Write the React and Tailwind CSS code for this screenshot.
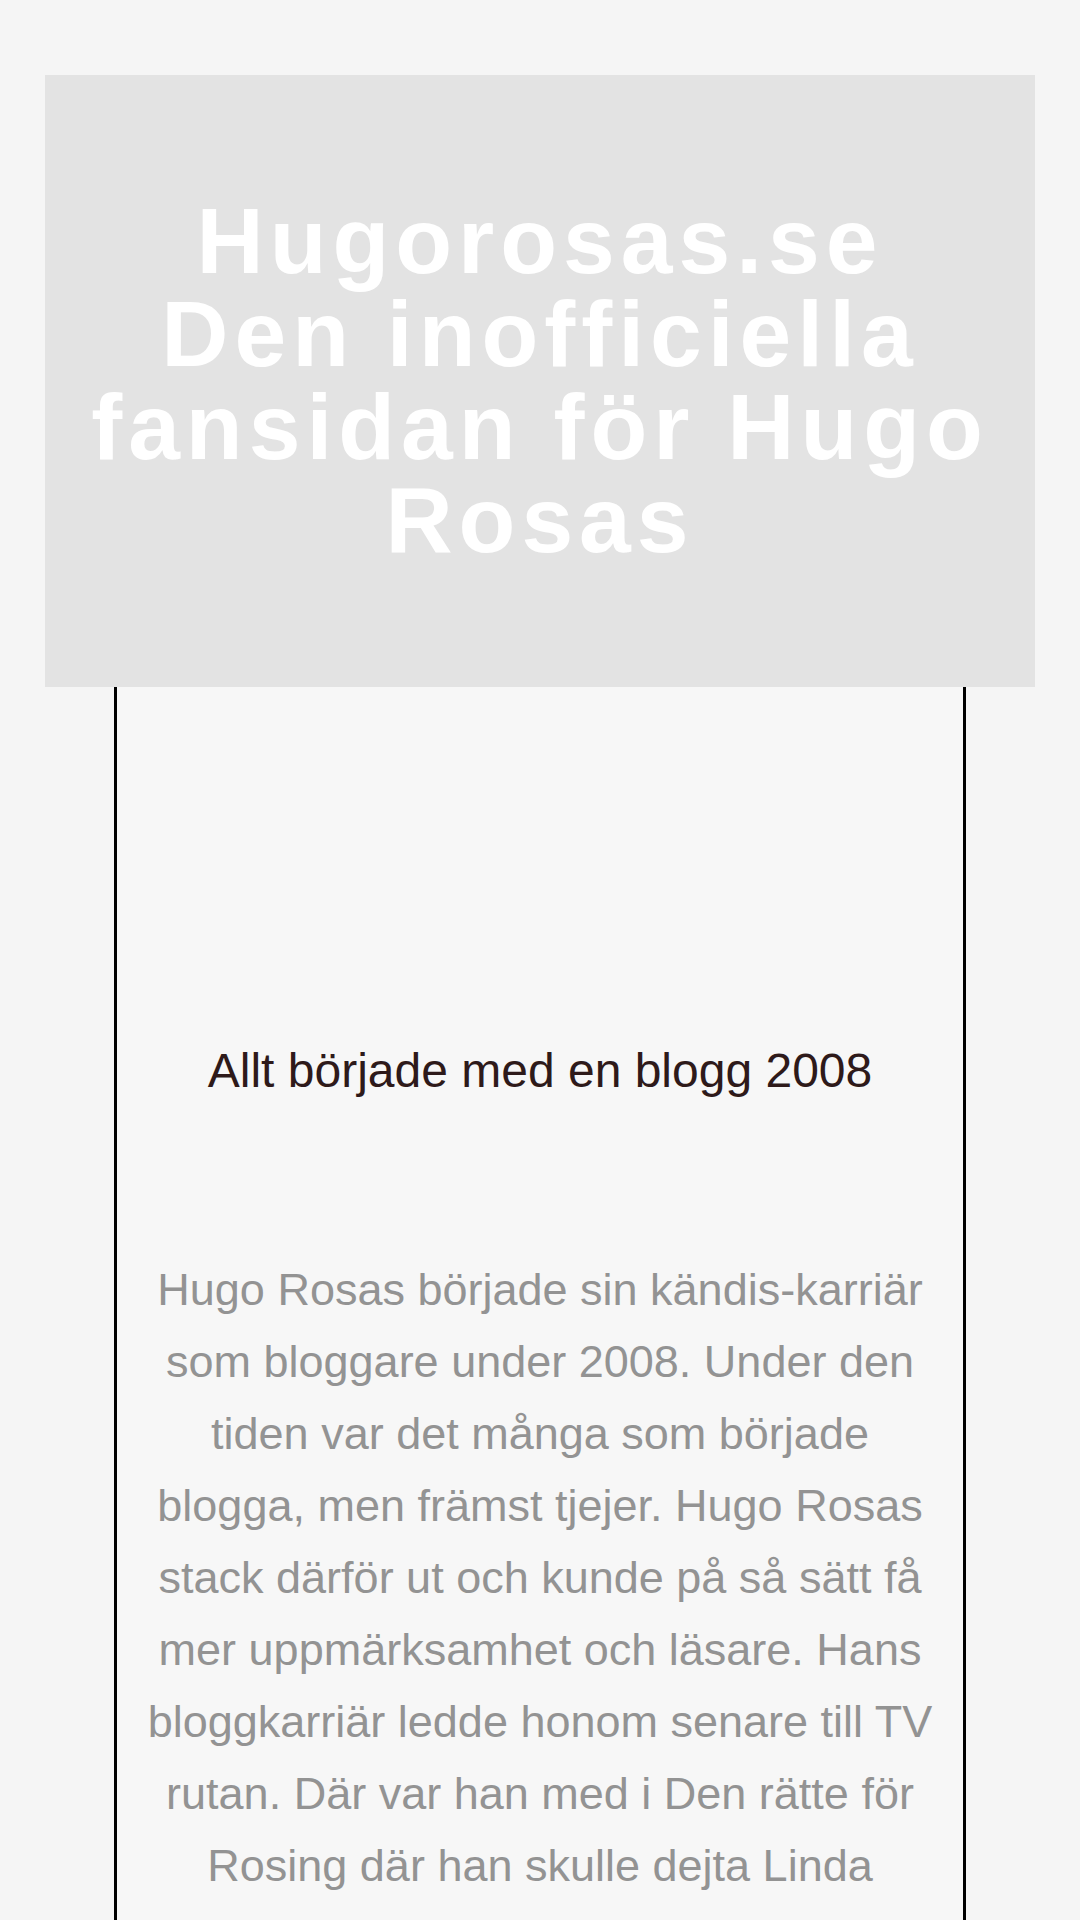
export default function App() {
  const font = { fontFamily: '"Liberation Sans", Arial, sans-serif' };
  return (
    <div className="min-h-[1920px] bg-[#f5f5f5] overflow-hidden" style={font}>
      <div className="pt-[75px] px-[45px]">
        <header className="bg-[#e3e3e3] py-[120px] px-[20px]">
          <h1 className="text-white font-bold text-center text-[93px] leading-[93px] tracking-[6px]">
            Hugorosas.se
            <br />
            Den inofficiella fansidan för Hugo Rosas
          </h1>
        </header>
      </div>
      <main className="mx-[114px] border-x-[3px] border-black bg-[#f7f7f7] min-h-[1234px]">
        <h2 className="pt-[356px] text-center text-[48px] leading-[55px] text-[#2e1a1a] font-normal">
          Allt började med en blogg 2008
        </h2>
        <p className="mt-[156px] px-[27px] text-center text-[45px] leading-[72px] text-[#939393]">
          Hugo Rosas började sin kändis-karriär som bloggare under 2008. Under den tiden var det många som började blogga, men främst tjejer. Hugo Rosas stack därför ut och kunde på så sätt få mer uppmärksamhet och läsare. Hans bloggkarriär ledde honom senare till TV rutan. Där var han med i Den rätte för Rosing där han skulle dejta Linda Rosing. Det var ett program som sändes på TV och som många tittade på.
        </p>
      </main>
    </div>
  );
}
